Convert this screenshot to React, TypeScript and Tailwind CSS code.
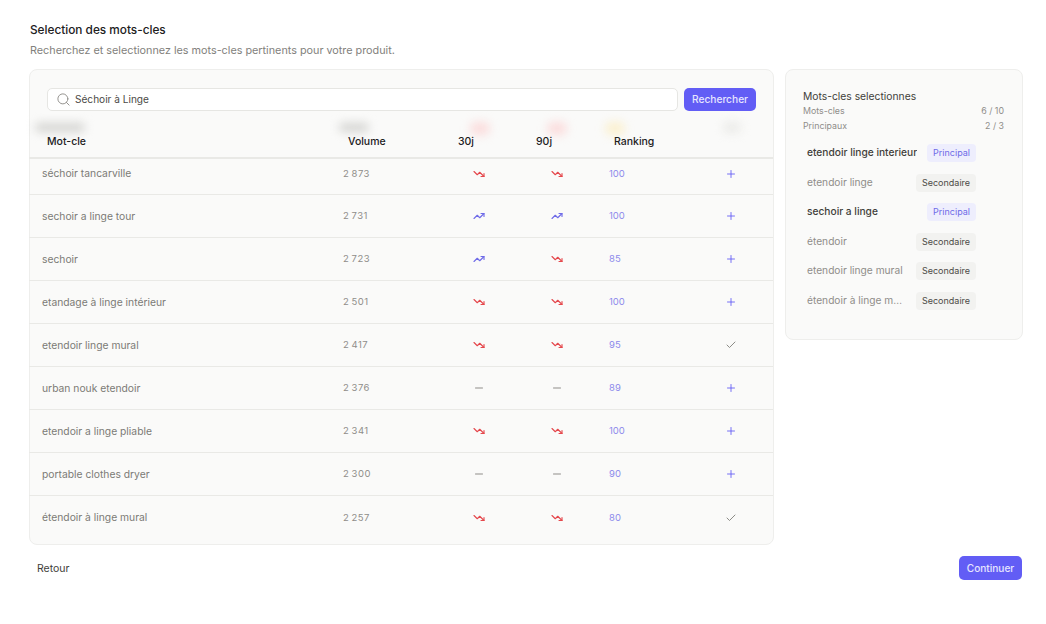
import { Check, Minus, Plus, Search, TrendingDown, TrendingUp } from "lucide-react";

type Trend = "up" | "down" | "flat";

type Keyword = {
  name: string;
  volume: string;
  d30: Trend;
  d90: Trend;
  ranking: number;
  selected?: boolean;
};

const keywords: Keyword[] = [
  { name: "séchoir tancarville", volume: "2\u2009873", d30: "down", d90: "down", ranking: 100 },
  { name: "sechoir a linge tour", volume: "2\u2009731", d30: "up", d90: "up", ranking: 100 },
  { name: "sechoir", volume: "2\u2009723", d30: "up", d90: "down", ranking: 85 },
  { name: "etandage à linge intérieur", volume: "2\u2009501", d30: "down", d90: "down", ranking: 100 },
  { name: "etendoir linge mural", volume: "2\u2009417", d30: "down", d90: "down", ranking: 95, selected: true },
  { name: "urban nouk etendoir", volume: "2\u2009376", d30: "flat", d90: "flat", ranking: 89 },
  { name: "etendoir a linge pliable", volume: "2\u2009341", d30: "down", d90: "down", ranking: 100 },
  { name: "portable clothes dryer", volume: "2\u2009300", d30: "flat", d90: "flat", ranking: 90 },
  { name: "étendoir à linge mural", volume: "2\u2009257", d30: "down", d90: "down", ranking: 80, selected: true },
];

const picked = [
  { name: "etendoir linge interieur", main: true },
  { name: "etendoir linge", main: false },
  { name: "sechoir a linge", main: true },
  { name: "étendoir", main: false },
  { name: "etendoir linge mural", main: false },
  { name: "étendoir à linge mural", main: false },
];

const TrendIcon = ({ trend }: { trend: Trend }) => {
  if (trend === "up") return <TrendingUp size={12} strokeWidth={2.25} className="text-[#6f6be8]" />;
  if (trend === "down") return <TrendingDown size={12} strokeWidth={2.25} className="text-[#e5484d]" />;
  return <Minus size={12} strokeWidth={2} className="text-[#8f8d89]" />;
};

const App = () => {
  return (
    <div className="w-[1046px] h-[624px] overflow-hidden bg-white pl-[29px] pt-[22px] font-['Inter',sans-serif]">
      <h1 className="pl-[1px] text-[11.8px] leading-[16px] font-medium text-[#21201c]">Selection des mots-cles</h1>
      <p className="mt-[5px] pl-[1px] text-[10.8px] leading-[16px] text-[#82817c]">
        Recherchez et selectionnez les mots-cles pertinents pour votre produit.
      </p>

      <div className="mt-[10px] flex items-start gap-[11px]">
        <div className="relative w-[745px] rounded-[8px] border border-[#eeeeec] bg-[#fafaf9] pb-[5px]">
          <div className="flex gap-[6px] pl-[17px] pt-[18px]">
            <div className="flex h-[23px] w-[631px] items-center gap-[4px] rounded-[5px] border border-[#e6e6e3] bg-white pl-[8px]">
              <Search size={15} strokeWidth={1.5} className="text-[#8f8d89]" />
              <span className="text-[10.1px] text-[#4b4a46]">Séchoir à Linge</span>
            </div>
            <button className="h-[23px] w-[72px] rounded-[5px] bg-[#625df5] text-[10.2px] font-medium text-[#e6e5ff]">
              Rechercher
            </button>
          </div>

          <div className="relative ml-[-1px] grid h-[48px] grid-cols-[301px_97px_78px_78px_110px_50px] items-center border-b-2 border-[#e9e9e6] pl-[18px] pt-[15px] text-[10.5px] font-medium text-[#21201c]">
            <span className="absolute left-[6px] top-[12px] h-[9px] w-[50px] rounded-full bg-[#d4d4d1] blur-[5px]" />
            <span className="absolute left-[310px] top-[12px] h-[9px] w-[30px] rounded-full bg-[#d4d4d1] blur-[5px]" />
            <span className="absolute left-[441px] top-[11px] h-[13px] w-[20px] rounded-full bg-[#fbdcdc] blur-[5px]" />
            <span className="absolute left-[518px] top-[11px] h-[13px] w-[20px] rounded-full bg-[#fbdcdc] blur-[5px]" />
            <span className="absolute left-[576px] top-[11px] h-[13px] w-[20px] rounded-full bg-[#fbf0cf] blur-[5px]" />
            <span className="absolute left-[694px] top-[11px] h-[11px] w-[18px] rounded-full bg-[#ebebe8] blur-[5px]" />
            <span className="relative">Mot-cle</span>
            <span className="relative">Volume</span>
            <span className="relative pl-[13px]">30j</span>
            <span className="relative pl-[13px]">90j</span>
            <span className="relative pl-[13px]">Ranking</span>
            <span />
          </div>

          {keywords.map((k, i) => (
            <div
              key={k.name}
              className={
                i === 0
                  ? "ml-[-1px] grid h-[36px] grid-cols-[301px_97px_78px_78px_110px_50px] items-center border-b border-[#e9e9e6] pb-[6px] pl-[13px]"
                  : i === keywords.length - 1
                    ? "ml-[-1px] grid h-[43px] grid-cols-[301px_97px_78px_78px_110px_50px] items-center pl-[13px]"
                    : "ml-[-1px] grid h-[43px] grid-cols-[301px_97px_78px_78px_110px_50px] items-center border-b border-[#e9e9e6] pl-[13px]"
              }
            >
              <span className="pt-[1px] text-[10.3px] text-[#7c7b76]">{k.name}</span>
              <span className="pt-[1px] text-[9.5px] tracking-[0.5px] text-[#8f8d89]">{k.volume}</span>
              <span className="flex justify-center"><TrendIcon trend={k.d30} /></span>
              <span className="flex justify-center"><TrendIcon trend={k.d90} /></span>
              <span className="pl-[13px] pt-[1px] text-[9.5px] text-[#8d8aec]">{k.ranking}</span>
              <span className="flex justify-center">
                {k.selected ? (
                  <Check size={12} strokeWidth={1.75} className="text-[#7c7b76]" />
                ) : (
                  <Plus size={12} strokeWidth={1.75} className="text-[#625df5]" />
                )}
              </span>
            </div>
          ))}
        </div>

        <div className="h-[271px] w-[238px] rounded-[8px] border border-[#eeeeec] bg-[#fafaf9] pl-[17px] pr-[18px] pt-[19px]">
          <h2 className="text-[10.3px] leading-[14px] text-[#3f3e3a]">Mots-cles selectionnes</h2>
          <div className="flex justify-between text-[8.8px] leading-[15px] text-[#8f8d89]">
            <span>Mots-cles</span>
            <span>6 / 10</span>
          </div>
          <div className="flex justify-between text-[8.8px] leading-[15px] text-[#8f8d89]">
            <span>Principaux</span>
            <span>2 / 3</span>
          </div>
          <div className="mt-[11px] ml-[4px] flex w-[169px] flex-col gap-[11.5px]">
            {picked.map((p) => (
              <div key={p.name} className="flex h-[18px] items-center justify-between gap-[9px]">
                <span className={p.main ? "min-w-0 truncate text-[10.2px] font-medium text-[#3f3e3a]" : "min-w-0 truncate text-[10.2px] text-[#8f8d89]"}>
                  {p.name}
                </span>
                <span
                  className={
                    p.main
                      ? "flex h-[18px] w-[49px] shrink-0 items-center justify-center rounded-[4px] bg-[#eeeefd] text-[9px] text-[#6f6be8]"
                      : "flex h-[18px] w-[60px] shrink-0 items-center justify-center rounded-[4px] bg-[#f2f2f0] text-[9px] text-[#4b4a46]"
                  }
                >
                  {p.main ? "Principal" : "Secondaire"}
                </span>
              </div>
            ))}
          </div>
        </div>
      </div>

      <div className="mt-[11px] flex w-[993px] items-center justify-between">
        <button className="pl-[8px] pt-[1px] text-[10.5px] text-[#3f3e3a]">Retour</button>
        <button className="h-[24px] w-[63px] rounded-[5px] bg-[#625df5] pt-[1px] text-[10.1px] font-medium text-[#e6e5ff]">
          Continuer
        </button>
      </div>
    </div>
  );
};

export default App;
